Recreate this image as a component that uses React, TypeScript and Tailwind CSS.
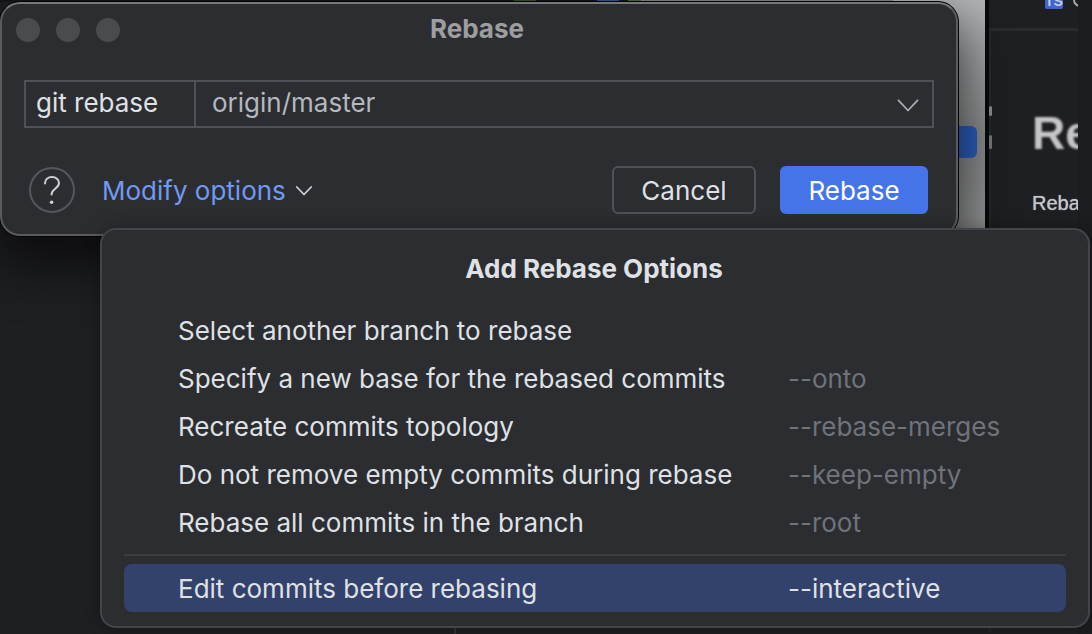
import React from "react";

type Option = { label: string; flag?: string };

const OPTIONS: Option[] = [
  { label: "Select another branch to rebase" },
  { label: "Specify a new base for the rebased commits", flag: "--onto" },
  { label: "Recreate commits topology", flag: "--rebase-merges" },
  { label: "Do not remove empty commits during rebase", flag: "--keep-empty" },
  { label: "Rebase all commits in the branch", flag: "--root" },
];

function Backdrop() {
  return (
    <div className="flex min-h-screen bg-[#1e1f22]">
      <div className="flex min-w-0 flex-1 flex-col">
        <div className="flex h-[2px] bg-[#151617]">
          <div className="ml-[514px] w-[22px] bg-[#35502f]" />
          <div className="ml-[61px] w-[22px] bg-[#35549f]" />
          <div className="ml-[9px] w-[13px] bg-[#4a6a44]" />
          <div className="flex-1 bg-[#858a8b]" />
        </div>
        <div className="flex flex-1">
          <div className="w-[456px] border-r-2 border-[#303135]" />
        </div>
      </div>
      <div className="flex h-[280px] w-[92px] flex-col items-end bg-linear-to-b from-[#b0b3b4] via-[#88898a] to-[#9a9b9c] pr-2">
        <div className="mt-[126px] h-8 w-[30px] rounded-md bg-[#2a5fbc]" />
      </div>
      <div className="flex w-[107px]">
        <div className="h-[280px] w-1 bg-[#090a0b]" />
        <div className="relative w-[89px] overflow-hidden">
          <div className="flex h-7 gap-[10px] pl-[56px]">
            <div className="flex h-[9px] w-[18px] shrink-0 items-end justify-center overflow-hidden rounded-b-xs bg-[#3f66ca] font-['Liberation_Sans',sans-serif] text-[14px] leading-[16px] font-bold text-[#c3cbe0]">
              TS
            </div>
            <div className="h-[7px] w-4 shrink-0 rounded-bl-lg border-b-2 border-l-2 border-[#a4a5a8]" />
          </div>
          <div className="h-[3px] bg-[#2a2b2f]" />
          <div className="h-[600px] border-l-2 border-[#27282c] pl-[41px] font-['Liberation_Sans',sans-serif]">
            <div className="pt-[75px] text-[46px] leading-[54px] font-bold text-[#c6c6ca] blur-[1px]">
              Re
            </div>
            <div className="pt-[31px] text-[20px] leading-[24px] text-[#c6c7ca] [text-shadow:0_0_1px_#a9aaad]">
              Reba
            </div>
          </div>
          <div className="absolute top-[106px] left-0 h-[10px] w-[3px] rounded-xs bg-[#8b8c8e]" />
          <div className="absolute top-[135px] left-0 h-[14px] w-[3px] rounded-xs bg-[#77787a]" />
        </div>
        <div className="flex-1 bg-[#1c1d20]" />
      </div>
    </div>
  );
}

function RebaseDialog() {
  return (
    <section
      aria-labelledby="dialog-title"
      className="absolute top-[2px] right-[134px] left-0 rounded-[20px] border-2 border-[#5b5c5f] border-t-[#77787a] bg-[#2b2d30] px-[22px] pb-5 shadow-[0_0_0_1px_#050505,0_24px_50px_6px_rgba(0,0,0,0.6)]"
    >
      <header className="relative flex h-[76px] items-start justify-center pt-[9px] pr-1">
        <div className="absolute top-[14px] -left-2 flex gap-4">
          <span className="size-6 rounded-full bg-[#4a4b4c]" />
          <span className="size-6 rounded-full bg-[#4a4b4c]" />
          <span className="size-6 rounded-full bg-[#4a4b4c]" />
        </div>
        <h1 id="dialog-title" className="text-[26px] leading-8 font-bold text-[#9d9ea0]">
          Rebase
        </h1>
      </header>

      <div className="flex h-12 border-2 border-[#4e5157]">
        <label
          htmlFor="upstream"
          className="flex w-[170px] items-center border-r-2 border-[#4e5157] pb-[2px] pl-[10px] text-[#dfe1e5]"
        >
          git rebase
        </label>
        <div className="relative flex-1">
          <select
            id="upstream"
            className="h-full w-full appearance-none bg-transparent pb-[2px] pl-4 text-[#b4b8bf] outline-none"
          >
            <option>origin/master</option>
          </select>
          <svg
            className="pointer-events-none absolute top-[16px] right-[13px]"
            width="22"
            height="14"
            viewBox="0 0 22 14"
            fill="none"
            stroke="#a9abb0"
            strokeWidth="1.8"
            strokeLinecap="round"
            strokeLinejoin="round"
          >
            <path d="M1.5 2.3 L11 12.5 L20.5 2.3" />
          </svg>
        </div>
      </div>

      <div className="mt-[38px] flex h-12 items-center pr-[6px] pl-[5px]">
        <button
          aria-label="Help"
          className="flex size-[46px] items-center justify-center rounded-full border-2 border-[#55575c]"
        >
          <svg width="20" height="30" viewBox="0 0 20 30" fill="none">
            <path
              d="M3 8.5 C3 4.5 6 2 10 2 C14 2 17 4.6 17 8 C17 13.5 9.6 13.5 9.6 19.5"
              stroke="#ced0d6"
              strokeWidth="2"
              strokeLinecap="round"
            />
            <circle cx="9.6" cy="27.3" r="1.8" fill="#ced0d6" />
          </svg>
        </button>
        <button className="ml-[27px] flex items-center gap-[9px] pt-[2px] text-[#7199f3]">
          Modify options
          <svg
            width="18"
            height="12"
            viewBox="0 0 18 12"
            fill="none"
            stroke="#ced0d6"
            strokeWidth="1.8"
            strokeLinecap="round"
            strokeLinejoin="round"
          >
            <path d="M1.8 2 L9 9.5 L16.2 2" />
          </svg>
        </button>
        <button className="ml-auto h-12 w-36 rounded-md border-2 border-[#4e5157] pt-[2px] text-[#dfe1e5]">
          Cancel
        </button>
        <button className="ml-6 h-12 w-[148px] rounded-md bg-[#4574e8] pt-[2px] text-white">
          Rebase
        </button>
      </div>
    </section>
  );
}

function MenuItem({ option, selected = false }: { option: Option; selected?: boolean }) {
  return (
    <button
      role="menuitem"
      className={
        selected
          ? "flex h-12 w-full items-center rounded-lg bg-[#33426c] pt-[2px] pl-[54px] text-left text-[#dfe1e5]"
          : "flex h-12 w-full items-center pl-[54px] text-left text-[#dfe1e5]"
      }
    >
      <span className="w-[610px] shrink-0">{option.label}</span>
      <span className={selected ? "text-[#dfe1e5]" : "text-[#6f737a]"}>{option.flag}</span>
    </button>
  );
}

function OptionsMenu() {
  return (
    <div
      role="menu"
      aria-labelledby="menu-title"
      className="absolute top-[228px] right-[2px] left-[100px] rounded-2xl border-2 border-[#43454a] bg-[#2b2d30] px-[22px] pb-[14px] shadow-[0_0_16px_rgba(0,0,0,0.3)]"
    >
      <h2
        id="menu-title"
        className="flex h-[77px] items-center justify-center pr-[2px] font-bold text-[#dfe1e5]"
      >
        Add Rebase Options
      </h2>
      {OPTIONS.map((option) => (
        <MenuItem key={option.label} option={option} />
      ))}
      <hr className="mt-[7px] mb-2 h-[2px] border-0 bg-[#3b3d41]" />
      <MenuItem option={{ label: "Edit commits before rebasing", flag: "--interactive" }} selected />
    </div>
  );
}

export default function App() {
  return (
    <main className="relative min-h-screen overflow-hidden font-[Inter,sans-serif] text-[26px] leading-8">
      <Backdrop />
      <RebaseDialog />
      <OptionsMenu />
    </main>
  );
}
